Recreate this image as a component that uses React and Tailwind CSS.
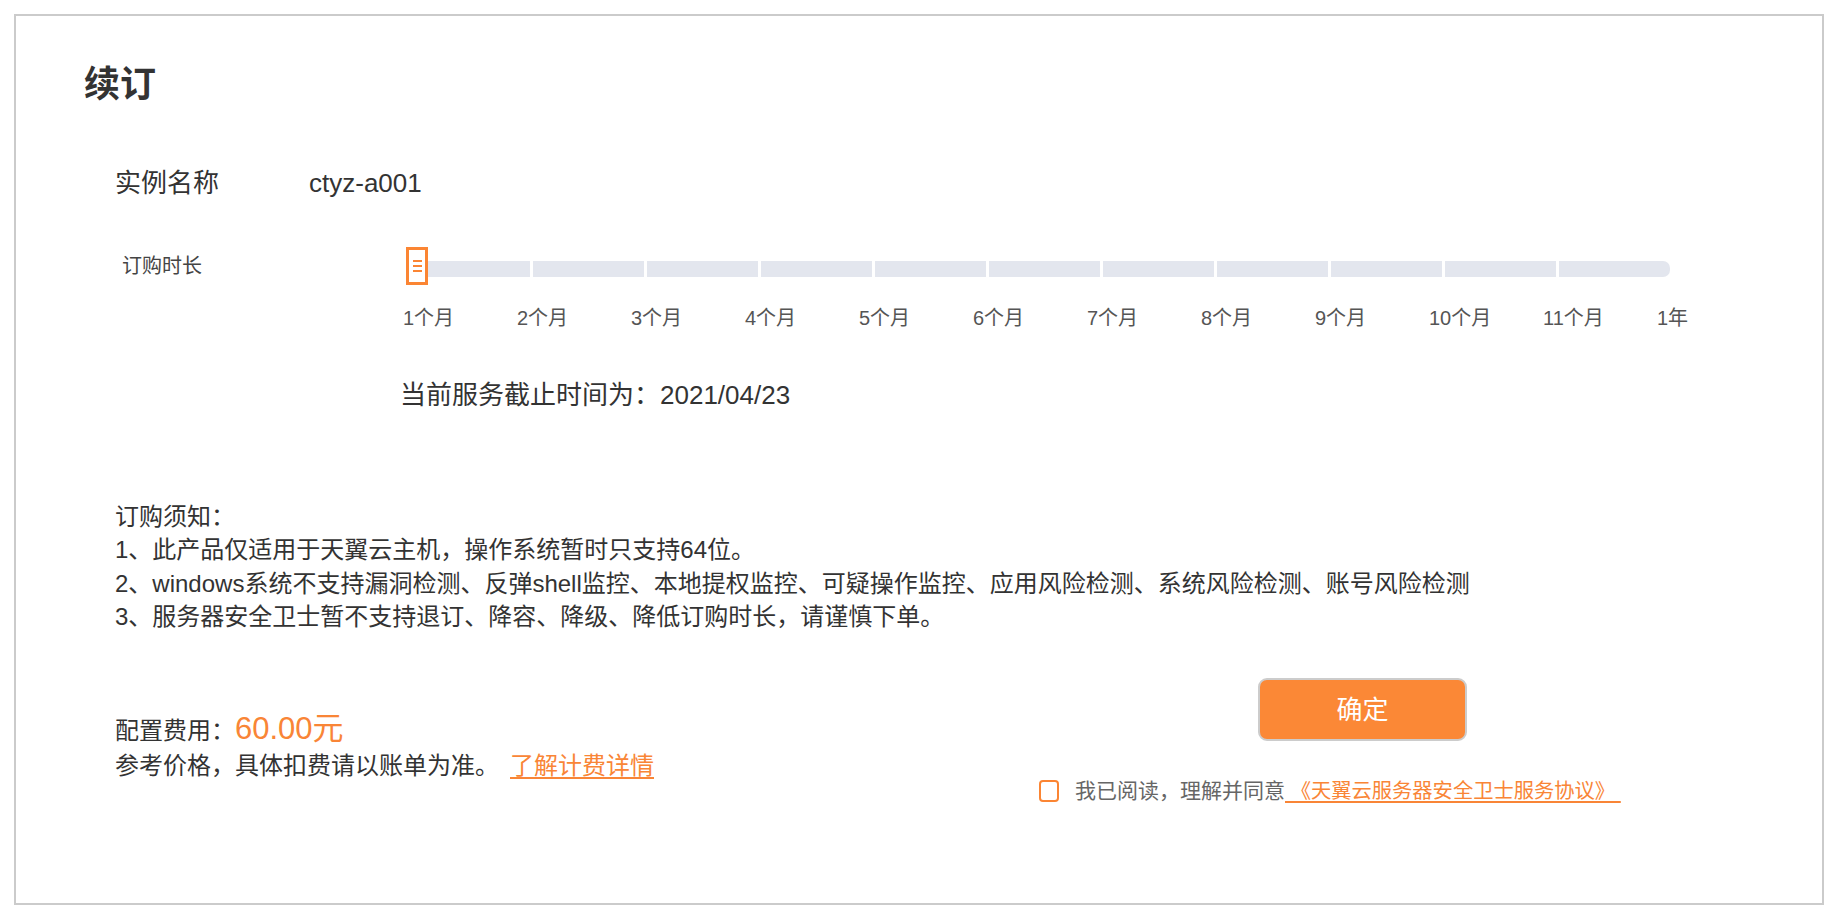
import React from "react";

export default function App() {
  const ticks = ["1个月", "2个月", "3个月", "4个月", "5个月", "6个月", "7个月", "8个月", "9个月", "10个月", "11个月", "1年"];
  const segs = Array.from({ length: 11 });
  return (
    <div className="w-[1839px] h-[915px] bg-white pl-[14px] pt-[14px] font-['Liberation_Sans','Noto_Sans_CJK_SC',sans-serif] text-[#333]">
      <div className="w-[1810px] h-[891px] border-2 border-[#cbcbcb] pl-[68px] pt-[49px]">
        <div className="text-[36px] font-bold leading-[40px] text-[#333]">续订</div>

        <div className="mt-[60px] flex text-[26px] leading-[36px]">
          <div className="ml-[31px] w-[194px]">实例名称</div>
          <div>ctyz-a001</div>
        </div>

        <div className="mt-[46px] flex items-start">
          <div className="ml-[38px] mt-[7px] w-[284px] text-[20px] leading-[24px] text-[#444]">订购时长</div>
          <div className="relative w-[1265px]">
            <div className="h-[38px] pt-[14px] pl-[13px] flex gap-[3px]">
              {segs.map((_, i) => (
                <div
                  key={i}
                  className={
                    "w-[111px] h-[16px] bg-[#e3e6ee] " +
                    (i === 10 ? "rounded-r-[7px]" : "")
                  }
                />
              ))}
            </div>
            <div className="absolute left-0 top-0 w-[22px] h-[38px] border-[3px] border-[#fb8533] bg-white flex flex-col items-center justify-center gap-[3px]">
              <div className="w-[9px] h-[2px] bg-[#fb8533]" />
              <div className="w-[9px] h-[2px] bg-[#fb8533]" />
              <div className="w-[9px] h-[2px] bg-[#fb8533]" />
            </div>
            <div className="mt-[21px] -ml-[3px] flex text-[20px] leading-[24px] text-[#555]">
              {ticks.map((t) => (
                <div key={t} className="w-[114px] shrink-0">{t}</div>
              ))}
            </div>
          </div>
        </div>

        <div className="mt-[47px] ml-[316px] text-[26px] leading-[36px]">当前服务截止时间为：2021/04/23</div>

        <div className="mt-[87px] ml-[31px] text-[24px] leading-[33.3px]">
          <div>订购须知：</div>
          <div>1、此产品仅适用于天翼云主机，操作系统暂时只支持64位。</div>
          <div>2、windows系统不支持漏洞检测、反弹shell监控、本地提权监控、可疑操作监控、应用风险检测、系统风险检测、账号风险检测</div>
          <div>3、服务器安全卫士暂不支持退订、降容、降级、降低订购时长，请谨慎下单。</div>
        </div>

        <div className="mt-[45px] flex items-start">
          <div className="ml-[31px] w-[924px] shrink-0">
            <div className="mt-[33px] flex items-baseline leading-[36px]">
              <span className="text-[24px]">配置费用：</span>
              <span className="text-[31px] text-[#f98536]">60.00元</span>
            </div>
            <div className="text-[24px] leading-[34px]">
              参考价格，具体扣费请以账单为准。
              <a className="ml-[11px] text-[#f98536] underline underline-offset-[3px]">了解计费详情</a>
            </div>
          </div>
          <div>
            <button className="ml-[219px] w-[209px] h-[63px] border-2 border-[#cccccc] rounded-[9px] bg-[#fb8836] text-white text-[26px] leading-[30px]">
              确定
            </button>
            <div className="mt-[35px] flex items-center h-[30px]">
              <div className="w-[20px] h-[22px] border-2 border-[#fb8533] rounded-[4px] shrink-0" />
              <div className="ml-[16px] text-[21px] leading-[30px] text-[#666] whitespace-nowrap">
                我已阅读，理解并同意
                <a className="text-[20.3px] text-[#f98536] underline underline-offset-[3px]">{"\u00a0《天翼云服务器安全卫士服务协议》\u00a0"}</a>
              </div>
            </div>
          </div>
        </div>
      </div>
    </div>
  );
}
